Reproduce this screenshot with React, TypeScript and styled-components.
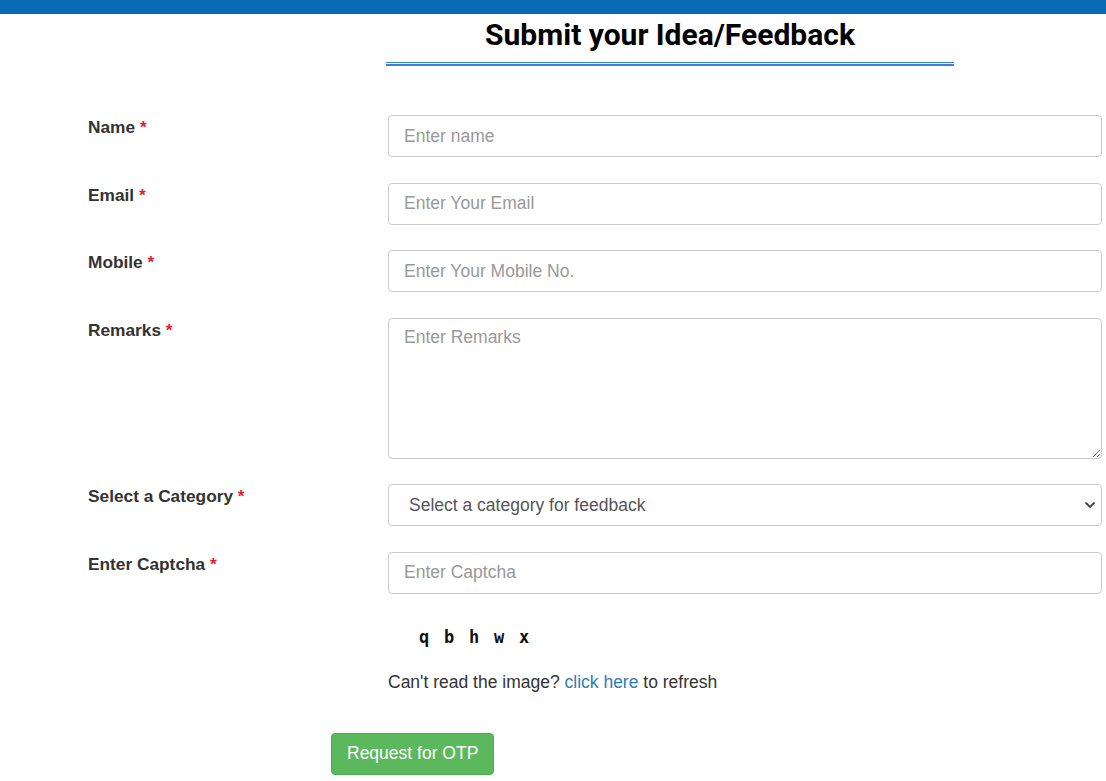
import React from "react";
import styled, { createGlobalStyle } from "styled-components";

const Global = createGlobalStyle`
  html, body { margin: 0; padding: 0; background: #fff; }
  body { font-family: "Liberation Sans", Arial, sans-serif; color: #333; }
  * { box-sizing: border-box; }
`;

const TopBar = styled.div`
  height: 14px;
  background: #0a6ab4;
`;

const TitleWrap = styled.div`
  width: 568px;
  margin-left: 386px;
  padding-top: 2px;
  text-align: center;
`;

const Title = styled.h2`
  margin: 0;
  font-family: Roboto, "Liberation Sans", sans-serif;
  font-weight: 700;
  font-size: 30px;
  line-height: 38px;
  color: #000;
`;

const Underline = styled.div`
  margin-top: 8px;
  height: 4px;
  border-top: 1px solid #3d80d0;
  border-bottom: 2px solid #3d80d0;
  background: #e8f0fb;
`;

const Form = styled.form`
  margin-top: 49px;
  display: flex;
  flex-direction: column;
  gap: 25.6px;
`;

const Row = styled.div`
  display: grid;
  grid-template-columns: 300px 714px;
  padding-left: 88px;
`;

const Label = styled.label`
  font-size: 17.3px;
  font-weight: 700;
  color: #333;
  padding-top: 2px;
  line-height: 20px;
`;

const Star = styled.span`
  color: #d9232d;
`;

const fieldCss = `
  width: 714px;
  border: 1px solid #ccc;
  border-radius: 4px;
  font-family: "Liberation Sans", Arial, sans-serif;
  font-size: 17.5px;
  color: #555;
  background: #fff;
  outline: none;
  &::placeholder { color: #999; }
`;

const Input = styled.input`
  ${fieldCss}
  height: 42px;
  padding: 0 15px;
`;

const TextArea = styled.textarea`
  ${fieldCss}
  height: 141px;
  padding: 8px 15px;
  display: block;
  resize: vertical;
`;

const SelectWrap = styled.div`
  position: relative;
  width: 714px;
`;

const Select = styled.select`
  ${fieldCss}
  height: 42px;
  padding: 0 20px;
  appearance: none;
  -webkit-appearance: none;
`;

const Chevron = styled.svg`
  position: absolute;
  right: 4px;
  top: 15px;
  pointer-events: none;
`;

const CaptchaBlock = styled.div`
  padding-left: 388px;
`;

const CaptchaImage = styled.div`
  margin-top: 28px;
  padding-left: 30px;
  height: 30px;
  display: flex;
  align-items: center;
  gap: 13px;
  font-family: "DejaVu Sans Mono", monospace;
  font-weight: 700;
  font-size: 17px;
  color: #111;
`;

const CaptchaChar = styled.span`
  width: 12px;
  text-align: center;
`;

const Refresh = styled.p`
  margin: 20px 0 0;
  font-size: 17.5px;
  color: #333;
`;

const Link = styled.a`
  color: #337ab7;
  text-decoration: none;
`;

const ButtonRow = styled.div`
  padding-left: 331px;
  margin-top: 40px;
`;

const Button = styled.button`
  height: 42px;
  padding: 0 15px;
  background: #5cb85c;
  border: 1px solid #4cae4c;
  border-radius: 4px;
  color: #fff;
  font-family: "Liberation Sans", Arial, sans-serif;
  font-size: 17.5px;
`;

const fields = [
  { label: "Name", placeholder: "Enter name" },
  { label: "Email", placeholder: "Enter Your Email" },
  { label: "Mobile", placeholder: "Enter Your Mobile No." },
];

export default function App() {
  return (
    <>
      <Global />
      <TopBar />
      <TitleWrap>
        <Title>Submit your Idea/Feedback</Title>
        <Underline />
      </TitleWrap>
      <Form onSubmit={(e) => e.preventDefault()}>
        {fields.map((f) => (
          <Row key={f.label}>
            <Label>
              {f.label} <Star>*</Star>
            </Label>
            <Input placeholder={f.placeholder} />
          </Row>
        ))}
        <Row>
          <Label>
            Remarks <Star>*</Star>
          </Label>
          <TextArea placeholder="Enter Remarks" />
        </Row>
        <Row>
          <Label>
            Select a Category <Star>*</Star>
          </Label>
          <SelectWrap>
            <Select defaultValue="">
              <option value="">Select a category for feedback</option>
            </Select>
            <Chevron width="16" height="12" viewBox="0 0 16 12">
              <path d="M3.5 3.5 L8 8 L12.5 3.5" fill="none" stroke="#444" strokeWidth="1.8" />
            </Chevron>
          </SelectWrap>
        </Row>
        <Row>
          <Label>
            Enter Captcha <Star>*</Star>
          </Label>
          <Input placeholder="Enter Captcha" />
        </Row>
      </Form>
      <CaptchaBlock>
        <CaptchaImage>
          {["q", "b", "h", "w", "x"].map((c) => (
            <CaptchaChar key={c}>{c}</CaptchaChar>
          ))}
        </CaptchaImage>
        <Refresh>
          Can't read the image? <Link href="#">click here</Link> to refresh
        </Refresh>
      </CaptchaBlock>
      <ButtonRow>
        <Button type="button">Request for OTP</Button>
      </ButtonRow>
    </>
  );
}
